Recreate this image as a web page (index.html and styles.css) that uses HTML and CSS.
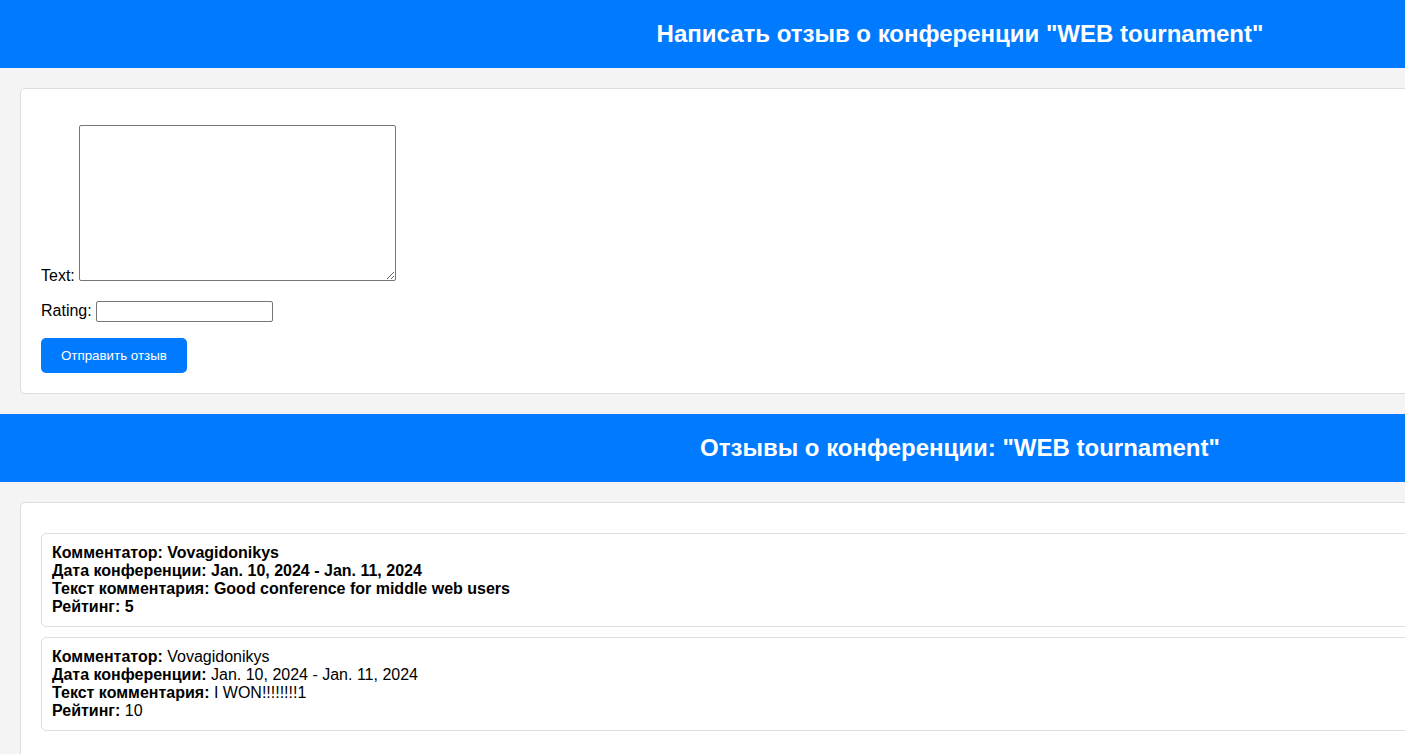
FILE: index.html
```html
<!DOCTYPE html>
<html lang="ru">
<head>
<meta charset="utf-8">
<title>Отзывы</title>
<link rel="stylesheet" href="styles.css">
</head>
<body>
<div class="page">
  <header class="banner"><h1 class="banner-title">Написать отзыв о конференции "WEB tournament"</h1></header>
  <section class="card">
    <form class="review-form">
      <p class="field"><label class="field-label" for="id_text">Text:</label> <textarea class="field-textarea" id="id_text" name="text"></textarea></p>
      <p class="field"><label class="field-label" for="id_rating">Rating:</label> <input class="field-input" id="id_rating" name="rating" type="text"></p>
      <button class="submit-btn" type="submit">Отправить отзыв</button>
    </form>
  </section>
  <header class="banner"><h1 class="banner-title">Отзывы о конференции: "WEB tournament"</h1></header>
  <section class="card">
    <div class="review review-bold">
      <div class="review-line"><strong>Комментатор:</strong> Vovagidonikys</div>
      <div class="review-line"><strong>Дата конференции:</strong> Jan. 10, 2024 - Jan. 11, 2024</div>
      <div class="review-line"><strong>Текст комментария:</strong> Good conference for middle web users</div>
      <div class="review-line"><strong>Рейтинг:</strong> 5</div>
    </div>
    <div class="review">
      <div class="review-line"><strong>Комментатор:</strong> Vovagidonikys</div>
      <div class="review-line"><strong>Дата конференции:</strong> Jan. 10, 2024 - Jan. 11, 2024</div>
      <div class="review-line"><strong>Текст комментария:</strong> I WON!!!!!!!!1</div>
      <div class="review-line"><strong>Рейтинг:</strong> 10</div>
    </div>
  </section>
</div>
</body>
</html>
```
FILE: styles.css
```css
html, body {
  margin: 0;
  padding: 0;
}
html {
  overflow: hidden;
}
body {
  background: #f4f4f4;
  font-family: "Liberation Sans", Arial, sans-serif;
  font-size: 16px;
  color: #000;
}
.page {
  width: 1920px;
  display: flow-root;
}
.banner {
  background: #007bff;
  color: #fff;
  padding: 20px;
  text-align: center;
}
.banner-title {
  margin: 0;
  font-size: 24px;
  line-height: 28px;
  font-weight: bold;
}
.card {
  background: #fff;
  border: 1px solid #ddd;
  border-radius: 5px;
  margin: 20px;
  padding: 20px;
}
.review-form {
  margin: 0;
}
.field {
  margin: 16px 0;
  line-height: 18px;
}
.field-textarea {
  box-sizing: border-box;
  width: 317px;
  height: 156px;
  border: 1px solid #767676;
  border-radius: 2px;
  vertical-align: baseline;
  margin: 0;
}
.field-input {
  box-sizing: border-box;
  width: 177px;
  height: 21px;
  border: 1px solid #767676;
  border-radius: 2px;
  margin: 0;
  padding: 1px 2px;
}
.submit-btn {
  display: block;
  background: #007bff;
  color: #fff;
  border: none;
  border-radius: 5px;
  padding: 10px 20px;
  font-family: "Liberation Sans", Arial, sans-serif;
  font-size: 13.33px;
  line-height: 15px;
  cursor: pointer;
}
.review {
  border: 1px solid #ddd;
  border-radius: 5px;
  padding: 10px;
  margin: 10px 0;
  line-height: 18px;
}
.review-bold {
  font-weight: bold;
}
```
